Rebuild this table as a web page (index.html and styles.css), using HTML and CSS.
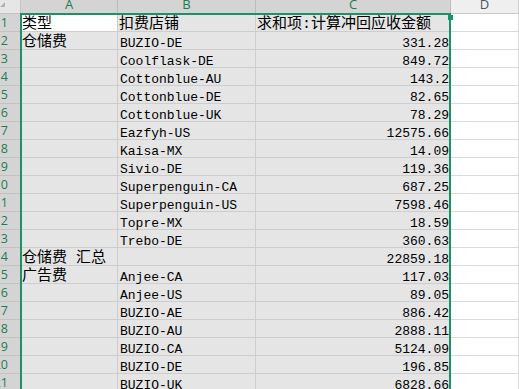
FILE: index.html
```html
<!DOCTYPE html>
<html lang="zh-CN">
<head>
<meta charset="utf-8">
<title>数据透视表</title>
<link rel="stylesheet" href="styles.css">
</head>
<body>
<div class="sheet">
  <div class="corner"><span class="tri"></span></div>
  <div class="ch sel">A</div>
  <div class="ch sel">B</div>
  <div class="ch sel">C</div>
  <div class="ch">D</div>

  <div class="rh"><span>1</span></div><div class="c zh active">类型</div><div class="c zh">扣费店铺</div><div class="c zh">求和项:计算冲回应收金额</div><div class="c d"></div>
  <div class="rh"><span>2</span></div><div class="c zh">仓储费</div><div class="c">BUZIO-DE</div><div class="c num">331.28</div><div class="c d"></div>
  <div class="rh"><span>3</span></div><div class="c"></div><div class="c">Coolflask-DE</div><div class="c num">849.72</div><div class="c d"></div>
  <div class="rh"><span>4</span></div><div class="c"></div><div class="c">Cottonblue-AU</div><div class="c num">143.2</div><div class="c d"></div>
  <div class="rh"><span>5</span></div><div class="c"></div><div class="c">Cottonblue-DE</div><div class="c num">82.65</div><div class="c d"></div>
  <div class="rh"><span>6</span></div><div class="c"></div><div class="c">Cottonblue-UK</div><div class="c num">78.29</div><div class="c d"></div>
  <div class="rh"><span>7</span></div><div class="c"></div><div class="c">Eazfyh-US</div><div class="c num">12575.66</div><div class="c d"></div>
  <div class="rh"><span>8</span></div><div class="c"></div><div class="c">Kaisa-MX</div><div class="c num">14.09</div><div class="c d"></div>
  <div class="rh"><span>9</span></div><div class="c"></div><div class="c">Sivio-DE</div><div class="c num">119.36</div><div class="c d"></div>
  <div class="rh"><span>10</span></div><div class="c"></div><div class="c">Superpenguin-CA</div><div class="c num">687.25</div><div class="c d"></div>
  <div class="rh"><span>11</span></div><div class="c"></div><div class="c">Superpenguin-US</div><div class="c num">7598.46</div><div class="c d"></div>
  <div class="rh"><span>12</span></div><div class="c"></div><div class="c">Topre-MX</div><div class="c num">18.59</div><div class="c d"></div>
  <div class="rh"><span>13</span></div><div class="c"></div><div class="c">Trebo-DE</div><div class="c num">360.63</div><div class="c d"></div>
  <div class="rh"><span>14</span></div><div class="c zh">仓储费 汇总</div><div class="c"></div><div class="c num">22859.18</div><div class="c d"></div>
  <div class="rh"><span>15</span></div><div class="c zh">广告费</div><div class="c">Anjee-CA</div><div class="c num">117.03</div><div class="c d"></div>
  <div class="rh"><span>16</span></div><div class="c"></div><div class="c">Anjee-US</div><div class="c num">89.05</div><div class="c d"></div>
  <div class="rh"><span>17</span></div><div class="c"></div><div class="c">BUZIO-AE</div><div class="c num">886.42</div><div class="c d"></div>
  <div class="rh"><span>18</span></div><div class="c"></div><div class="c">BUZIO-AU</div><div class="c num">2888.11</div><div class="c d"></div>
  <div class="rh"><span>19</span></div><div class="c"></div><div class="c">BUZIO-CA</div><div class="c num">5124.09</div><div class="c d"></div>
  <div class="rh"><span>20</span></div><div class="c"></div><div class="c">BUZIO-DE</div><div class="c num">196.85</div><div class="c d"></div>
  <div class="rh"><span>21</span></div><div class="c"></div><div class="c">BUZIO-UK</div><div class="c num">6828.66</div><div class="c d"></div>

  <div class="selection"><span class="handle"></span></div>
</div>
</body>
</html>
```
FILE: styles.css
```css
html, body {
  margin: 0;
  padding: 0;
  background: #ffffff;
  overflow: hidden;
}

.sheet {
  position: relative;
  display: grid;
  grid-template-columns: 21px 97px 138px 195px 68px;
  grid-template-rows: 14px repeat(21, 18px);
  width: 519px;
}

.corner {
  position: relative;
  background: #e6e6e6;
  border-right: 1px solid #c4c4c4;
  border-bottom: 1px solid #c4c4c4;
  box-sizing: border-box;
}

.tri {
  position: absolute;
  left: 0;
  top: 2px;
  width: 0;
  height: 0;
  border-left: 5px solid transparent;
  border-bottom: 5px solid #b2b2b2;
}

.ch {
  box-sizing: border-box;
  background: #efefef;
  border-right: 1px solid #d0d0d0;
  border-bottom: 1px solid #c8c8c8;
  font-family: "Open Sans", "Noto Sans", sans-serif;
  font-size: 13px;
  line-height: 9px;
  height: 14px;
  overflow: hidden;
  text-align: center;
  color: #445566;
}

.ch.sel {
  background: #d4d4d4;
  border-right-color: #bcbcbc;
  color: #1d7c52;
}

.rh {
  box-sizing: border-box;
  background: #d4d4d4;
  border-right: 1px solid #bcbcbc;
  border-bottom: 1px solid #c2c2c2;
  display: flex;
  justify-content: flex-end;
  padding-right: 12px;
  overflow: hidden;
  font-family: "Open Sans", "Noto Sans", sans-serif;
  font-size: 12.5px;
  line-height: 17px;
  color: #1d7c52;
  white-space: nowrap;
}

.c {
  box-sizing: border-box;
  background: #e5e5e5;
  border-right: 1px solid #cdcdcd;
  border-bottom: 1px solid #cdcdcd;
  padding: 0 1px 0 2px;
  font-family: "Liberation Mono", "Noto Sans CJK SC", monospace;
  font-size: 13px;
  line-height: 23px;
  color: #000000;
  white-space: nowrap;
}

.c.zh {
  font-family: "Liberation Mono", "Noto Sans CJK SC", sans-serif;
  font-size: 15px;
  line-height: 22px;
  padding-left: 1px;
}

.c.num {
  text-align: right;
}

.c.active {
  background: #ffffff;
}

.c.d {
  background: #ffffff;
  border-right-color: #dadada;
  border-bottom-color: #dadada;
}

.selection {
  position: absolute;
  left: 20px;
  top: 13px;
  width: 431px;
  height: 420px;
  box-sizing: border-box;
  border: 2px solid #1a9166;
  border-bottom: none;
  pointer-events: none;
}

.handle {
  position: absolute;
  left: 426px;
  top: 0;
  width: 5px;
  height: 5px;
  background: #1a9166;
}
```
